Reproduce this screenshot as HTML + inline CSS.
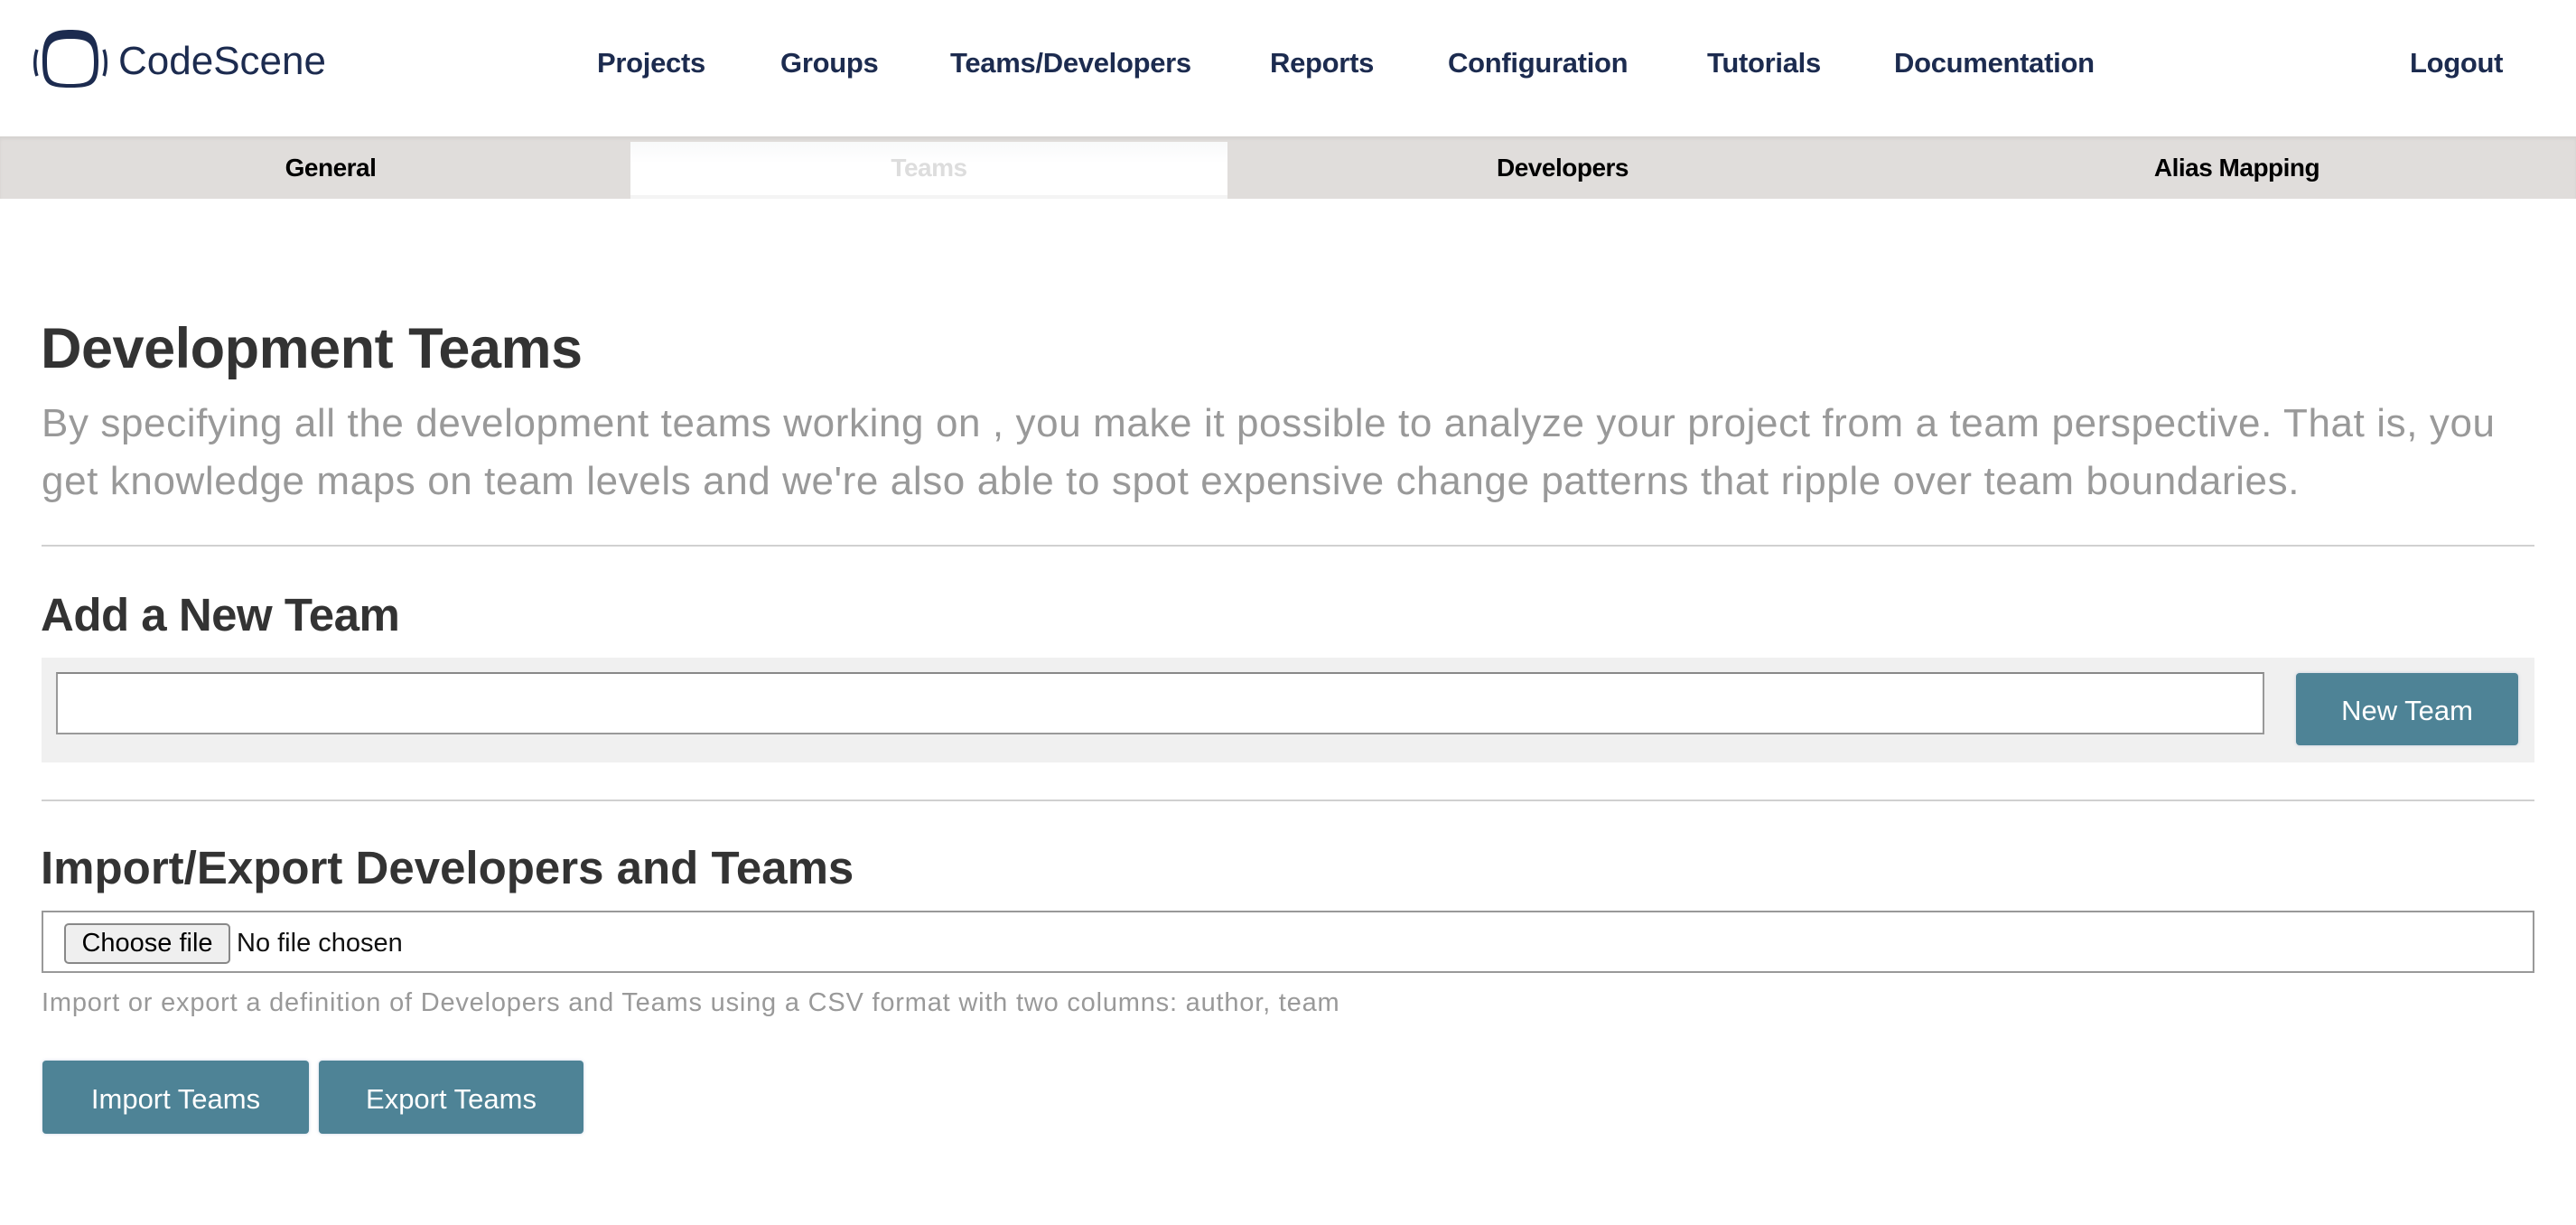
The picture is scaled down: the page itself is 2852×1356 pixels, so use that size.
<!DOCTYPE html>
<html><head><meta charset="utf-8"><style>
*{box-sizing:border-box;margin:0;padding:0}
body{width:2852px;height:1356px;background:#fff;font-family:"Liberation Sans",sans-serif;position:relative;overflow:hidden}
.a{position:absolute;white-space:nowrap}
.nav{top:52px;font-size:31px;font-weight:bold;color:#1c2b4f;letter-spacing:-0.3px}
.sub{position:absolute;top:151px;left:0;width:2852px;height:69px;background:#e0dddb;box-shadow:inset 0 3px 3px rgba(0,0,0,0.05)}
.tab{position:absolute;top:0;height:69px;line-height:69px;text-align:center;font-size:28px;font-weight:bold;color:#000;letter-spacing:-0.5px}
.h{color:#333;font-weight:bold;letter-spacing:-0.5px}
.btn{position:absolute;background:#4e8396;color:#fff;border-radius:4px;text-align:center;font-size:31px;box-shadow:0 0 3px rgba(150,170,200,0.5)}
.hr{position:absolute;left:46px;width:2760px;height:2px;background:#d0d0d0}
</style></head><body>
<svg class="a" style="left:36px;top:31px" width="84" height="70" viewBox="0 0 84 70">
<path d="M42 2 C17 2 11 10 11 36 C11 62 16 66 42 66 C68 66 73 62 73 36 C73 10 67 2 42 2 Z M42 12 C63 12 68 17 68 37 C68 58 64 62 42 62 C20 62 16 58 16 37 C16 17 21 12 42 12 Z" fill="#1c2b4f" fill-rule="evenodd"/>
<path d="M5 24 C2 32 2 45 5 53" stroke="#1c2b4f" stroke-width="3.5" fill="none"/>
<path d="M79 24 C82 32 82 45 79 53" stroke="#1c2b4f" stroke-width="3.5" fill="none"/>
</svg>
<div class="a" style="left:131px;top:43px;font-size:44px;color:#1c2b4f">CodeScene</div>
<div class="a nav" style="left:661px">Projects</div>
<div class="a nav" style="left:864px">Groups</div>
<div class="a nav" style="left:1052px">Teams/Developers</div>
<div class="a nav" style="left:1406px">Reports</div>
<div class="a nav" style="left:1603px">Configuration</div>
<div class="a nav" style="left:1890px">Tutorials</div>
<div class="a nav" style="left:2097px">Documentation</div>
<div class="a nav" style="left:2668px">Logout</div>
<div class="sub">
<div class="tab" style="left:0;width:732px">General</div>
<div class="tab" style="left:698px;top:6px;height:63px;line-height:57px;width:661px;background:linear-gradient(#f8f9fa,#fff 40%);color:#ddd;border-bottom:4px solid #f4f4f4">Teams</div>
<div class="tab" style="left:1359px;width:742px">Developers</div>
<div class="tab" style="left:2101px;width:751px">Alias Mapping</div>
</div>
<div class="a h" style="left:45px;top:350px;font-size:63px">Development Teams</div>
<div class="a" style="left:46px;top:437px;font-size:44px;letter-spacing:0.6px;line-height:64px;color:#999;white-space:normal;width:2770px">By specifying all the development teams working on , you make it possible to analyze your project from a team perspective. That is, you get knowledge maps on team levels and we're also able to spot expensive change patterns that ripple over team boundaries.</div>
<div class="hr" style="top:603px"></div>
<div class="a h" style="left:45px;top:651px;font-size:51px">Add a New Team</div>
<div class="a" style="left:46px;top:728px;width:2760px;height:116px;background:#f0f0f0"></div>
<div class="a" style="left:62px;top:744px;width:2445px;height:69px;background:#fff;border:2px solid #999;border-top-color:#888"></div>
<div class="btn" style="left:2542px;top:745px;width:246px;height:80px;line-height:84px">New Team</div>
<div class="hr" style="top:885px"></div>
<div class="a h" style="left:45px;top:931px;font-size:51px;letter-spacing:0">Import/Export Developers and Teams</div>
<div class="a" style="left:46px;top:1008px;width:2760px;height:69px;border:2px solid #999;background:#fff"></div>
<div class="a" style="left:71px;top:1022px;width:184px;height:45px;border:2px solid #888;border-radius:5px;background:#efefef;font-size:29px;line-height:41px;text-align:center;color:#000">Choose file</div>
<div class="a" style="left:262px;top:1028px;font-size:29px;color:#111">No file chosen</div>
<div class="a" style="left:46px;top:1094px;font-size:29px;letter-spacing:0.8px;color:#999">Import or export a definition of Developers and Teams using a CSV format with two columns: author, team</div>
<div class="btn" style="left:47px;top:1174px;width:295px;height:81px;line-height:85px">Import Teams</div>
<div class="btn" style="left:353px;top:1174px;width:293px;height:81px;line-height:85px">Export Teams</div>
</body></html>
